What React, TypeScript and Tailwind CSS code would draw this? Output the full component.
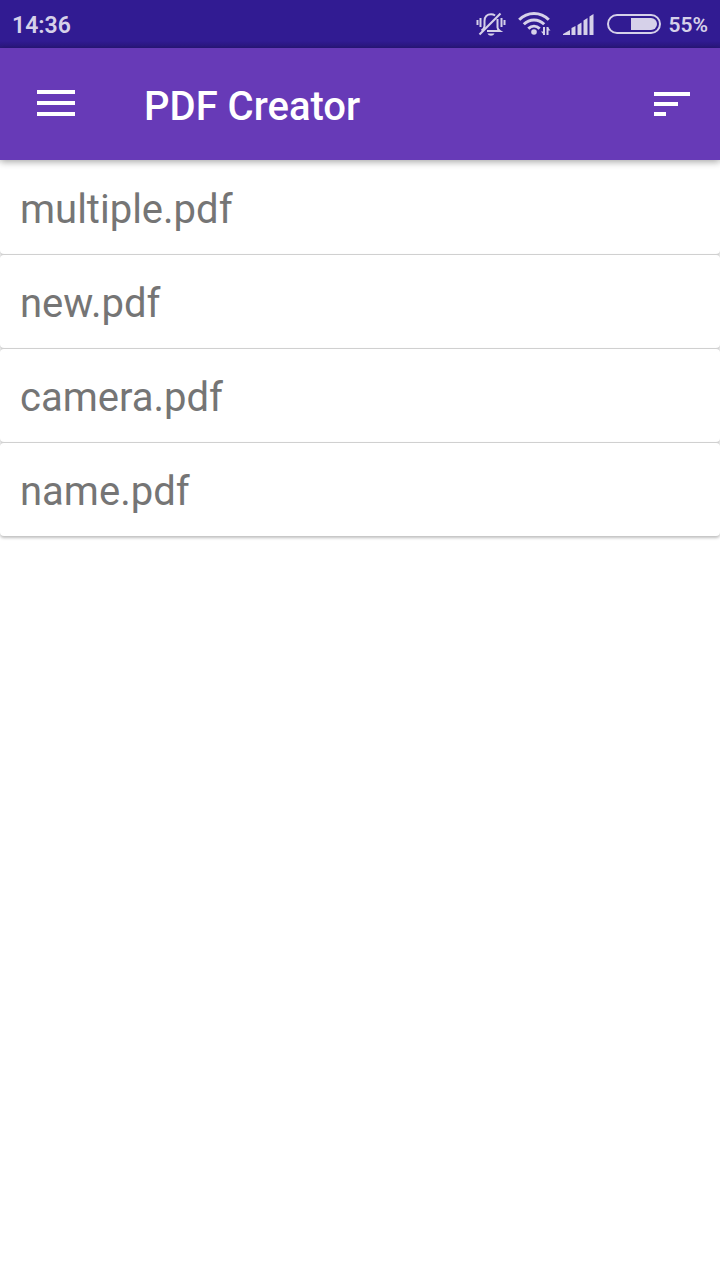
const files = ["multiple.pdf", "new.pdf", "camera.pdf", "name.pdf"];

function BellOffIcon() {
  return (
    <svg width="30" height="28" viewBox="0 0 30 28" fill="none" stroke="currentColor" strokeWidth="2" aria-hidden="true">
      <path d="M1.500 10v5M4.500 8v9M25.500 8v9M28.500 10v5" />
      <path d="M8.500 16V11c0-4.200 2.600-6.800 6.500-6.800 1.600 0 3 .5 4.100 1.300M21.500 9v8.500c0 1.500 1 2.500 2.500 3.500H11" />
      <path d="M8.500 16c0 2-1.500 3.500-3 4.500" />
      <path d="M3.500 24.500 24.500 3.500" strokeWidth="2.200" />
      <path d="M11.500 23.500h7c-.8 1.600-2 2.200-3.500 2.200s-2.700-.6-3.500-2.200Z" fill="currentColor" stroke="none" />
    </svg>
  );
}

function WifiIcon() {
  return (
    <svg width="33" height="26" viewBox="0 0 33 26" fill="none" stroke="currentColor" strokeWidth="3" aria-hidden="true">
      <path d="M1.200 8.800C9.500.3 22.500.3 30.800 8.800" />
      <path d="M5.800 13.300c5.800-5.800 14.600-5.800 20.400 0" />
      <path d="M10.300 17.600c3.400-3.200 8-3.200 11.400 0" />
      <circle cx="16" cy="21" r="2.800" fill="currentColor" stroke="none" />
      <path d="M26 16v8M29.500 16v8" strokeWidth="2" />
      <path d="m23 20.500 3 3.500V20.500ZM32.500 19.500l-3-3.500v3.500Z" fill="currentColor" stroke="none" />
    </svg>
  );
}

function SignalIcon() {
  return (
    <svg width="32" height="22" viewBox="0 0 32 22" fill="currentColor" aria-hidden="true">
      <path d="M0 22v-1L7 17v5ZM8.500 15l4-2v9h-4ZM14.500 12l4-2.500V22h-4ZM20.500 7.500l4-2.500v17h-4ZM26.500 3.500l4-2.500v21h-4Z" />
    </svg>
  );
}

function BatteryIcon() {
  return (
    <svg width="54" height="20" viewBox="0 0 54 20" fill="none" aria-hidden="true">
      <rect x="1" y="1" width="52" height="18" rx="9" stroke="currentColor" strokeWidth="2" />
      <path d="M24 4h20a6 6 0 0 1 0 12H24Z" fill="currentColor" />
    </svg>
  );
}

function StatusBar() {
  return (
    <div className="flex h-12 items-center justify-between bg-linear-to-b from-[#311b92] from-85% to-[#2a177e] px-3 font-semibold text-[#d6d1e9]">
      <time className="pt-1 text-[23px] leading-8">14:36</time>
      <div className="flex items-center">
        <BellOffIcon />
        <span className="ml-3"><WifiIcon /></span>
        <span className="ml-3"><SignalIcon /></span>
        <span className="mr-2 ml-3"><BatteryIcon /></span>
        <span className="pt-0.5 text-[21px] leading-8">55%</span>
      </div>
    </div>
  );
}

function Toolbar() {
  return (
    <header className="relative flex h-28 items-center bg-[#673ab7] px-6 text-white shadow-[0_2px_7px_rgba(0,0,0,0.35)]">
      <button type="button" aria-label="Open menu" className="flex size-16 items-center justify-center pb-0.5">
        <svg width="38" height="26" viewBox="0 0 38 26" fill="currentColor" aria-hidden="true">
          <path d="M0 0h38v4H0zM0 11h38v4H0zM0 22h38v4H0z" />
        </svg>
      </button>
      <h1 className="ml-14 flex-1 pt-1.5 text-[40px] leading-12 font-medium">PDF Creator</h1>
      <button type="button" aria-label="Sort files" className="flex h-16 w-12 items-center justify-center">
        <svg width="36" height="24" viewBox="0 0 36 24" fill="currentColor" aria-hidden="true">
          <path d="M0 0h36v4H0zM0 10h24v4H0zM0 20h12v4H0z" />
        </svg>
      </button>
    </header>
  );
}

export default function App() {
  return (
    <div className="min-h-screen bg-white font-['Roboto',sans-serif]">
      <StatusBar />
      <Toolbar />
      <main>
        <ul>
          {files.map((file) => (
            <li key={file} className="flex h-[94px] items-center rounded border-t border-[#d0d0d0] bg-white px-5 pt-1 text-[40px] leading-[60px] text-[#757575] shadow-[0_2px_3px_rgba(0,0,0,0.25)] first:border-transparent">
              {file}
            </li>
          ))}
        </ul>
      </main>
    </div>
  );
}
